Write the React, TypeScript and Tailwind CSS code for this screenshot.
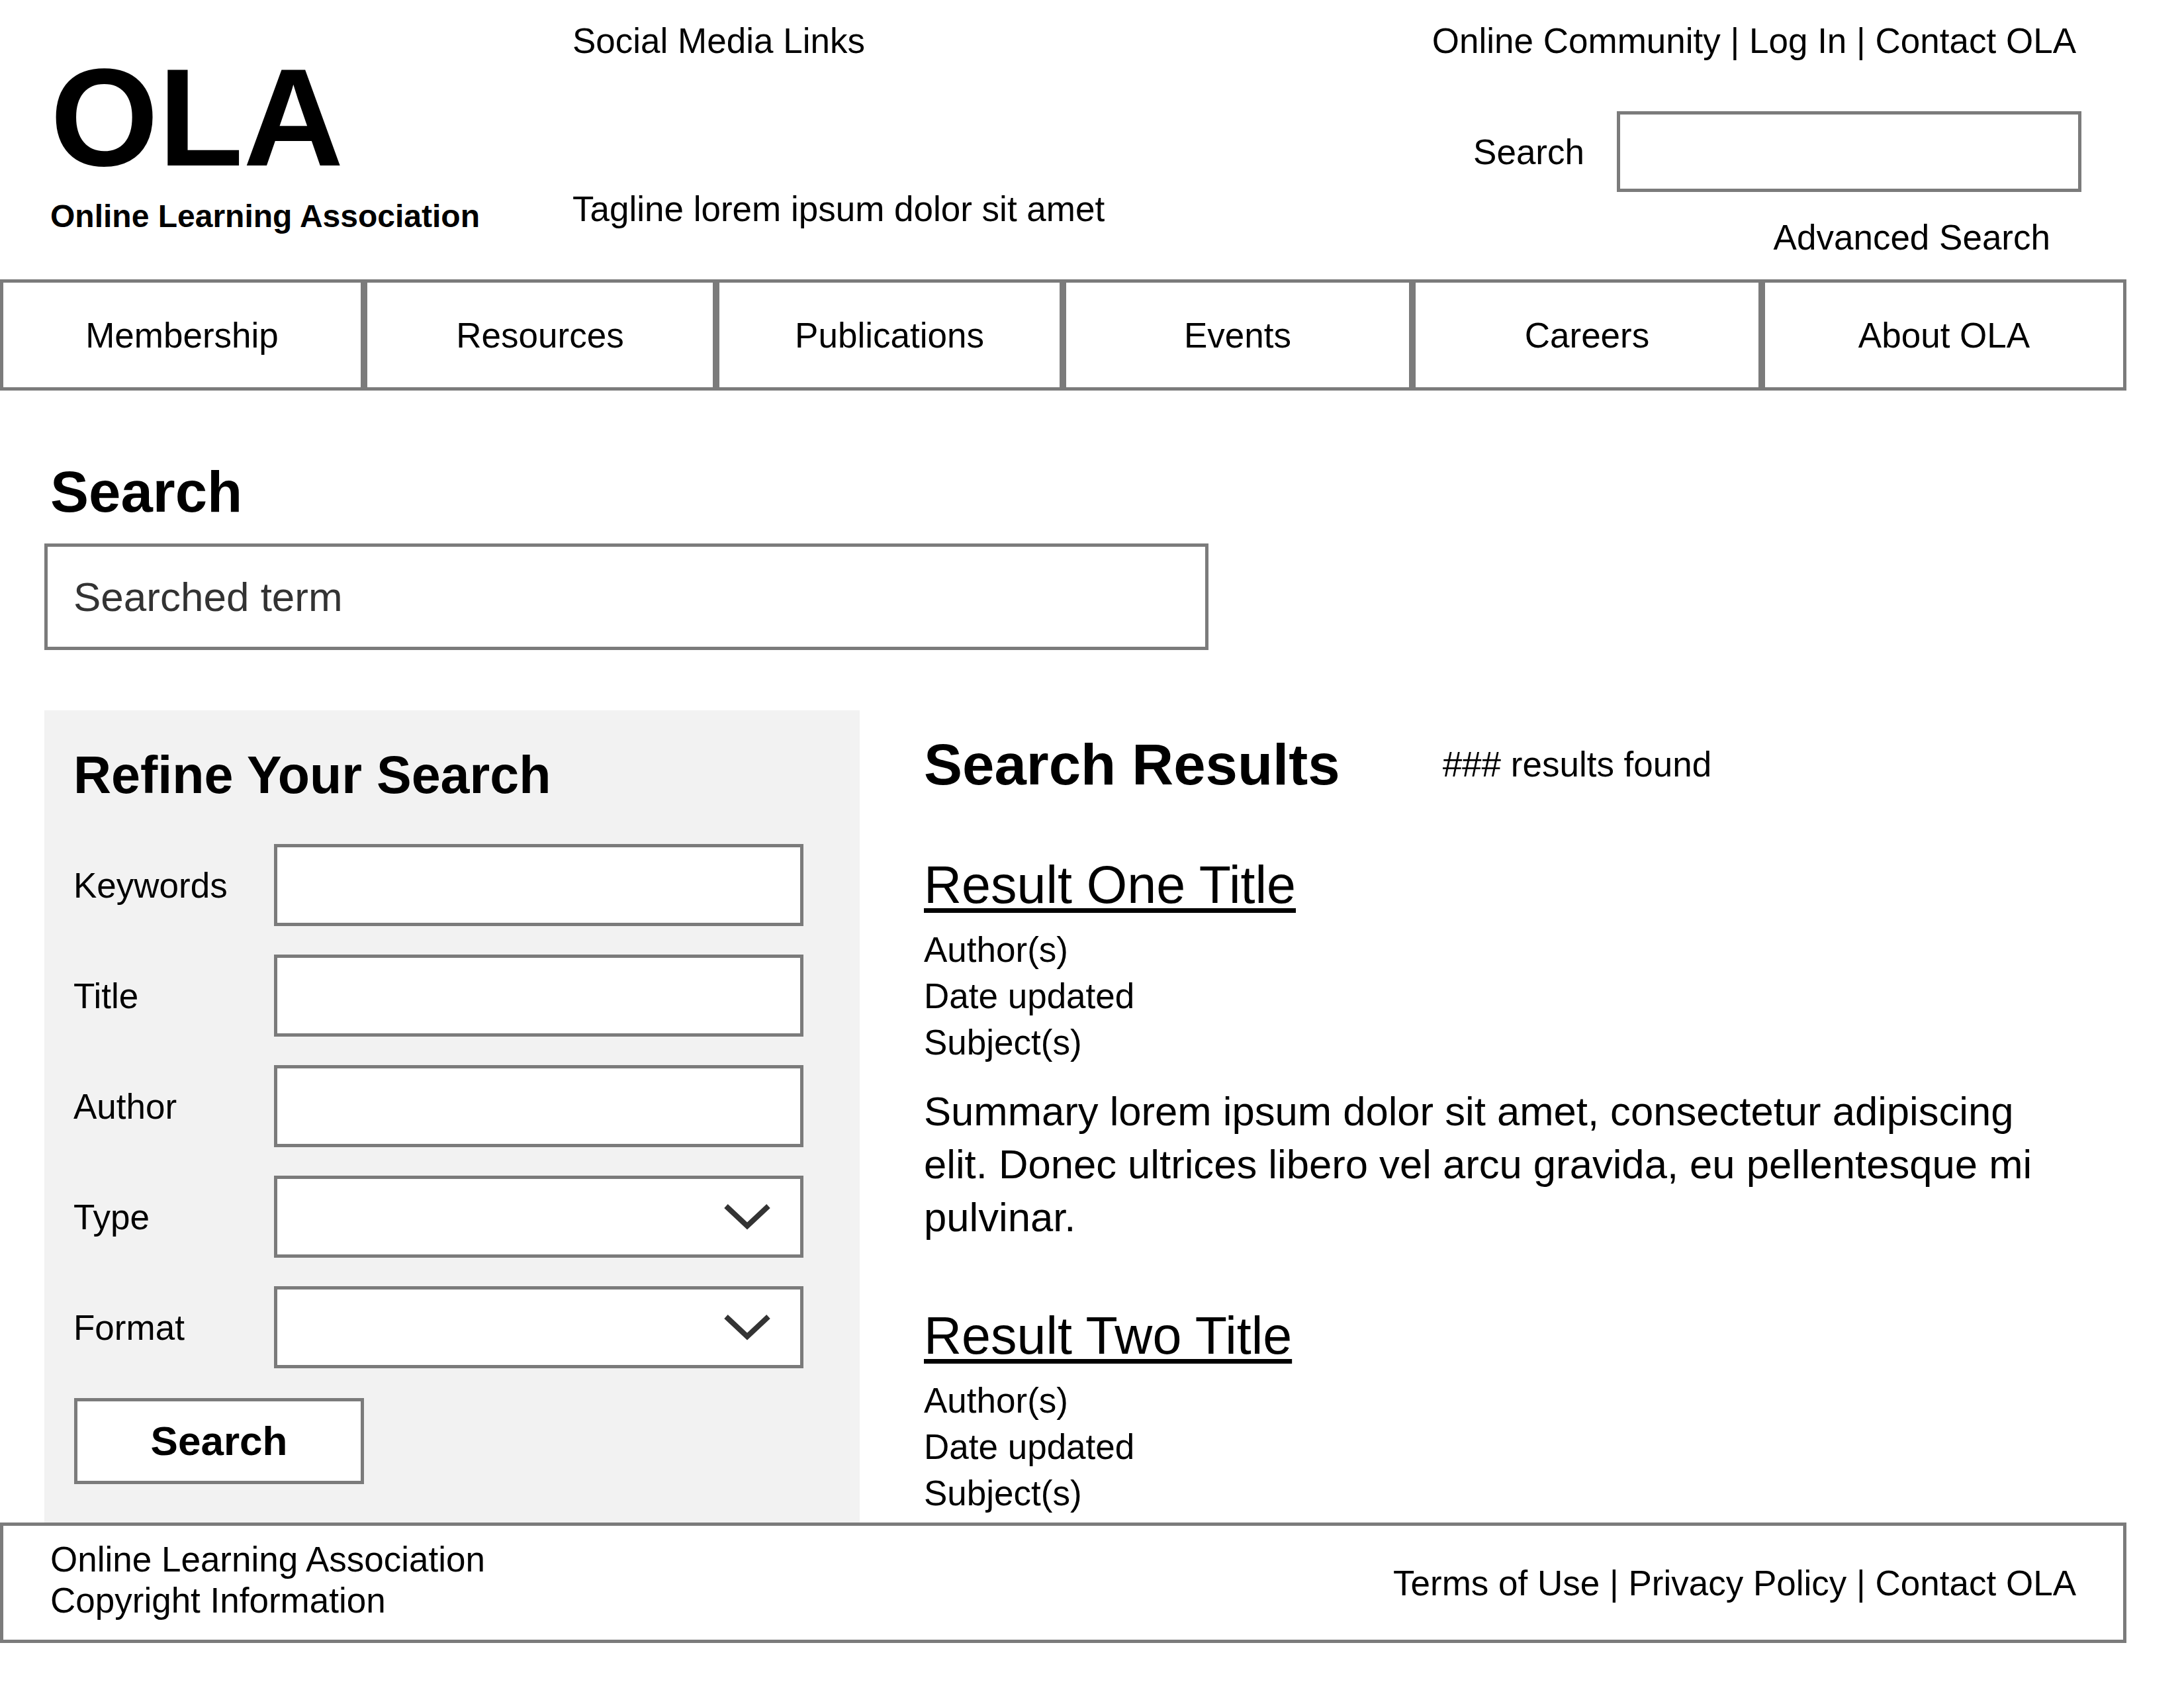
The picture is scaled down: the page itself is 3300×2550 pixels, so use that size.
import React from "react";

const font = { fontFamily: '"Liberation Sans", Arial, sans-serif' };

function Chevron() {
  return (
    <svg width="70" height="40" viewBox="0 0 70 40" className="mr-[45px]">
      <polyline points="3,4 35,34 67,4" fill="none" stroke="#333333" strokeWidth="8" />
    </svg>
  );
}

function FieldRow({ label, select }: { label: string; select?: boolean }) {
  return (
    <div className="flex items-center">
      <div className="w-[303px] text-[53px] leading-none text-black">{label}</div>
      <div className="flex h-[124px] w-[800px] items-center justify-end border-[5px] border-[#7b7b7b] bg-white">
        {select ? <Chevron /> : null}
      </div>
    </div>
  );
}

function Result({ title, summary }: { title: string; summary?: boolean }) {
  return (
    <div className="mt-[99px]">
      <div className="text-[79px] leading-none text-black underline decoration-[length:7px] underline-offset-[8px]">
        {title}
      </div>
      <div className="mt-[24px] text-[53px] leading-[70px] text-black">
        <div>Author(s)</div>
        <div>Date updated</div>
        <div>Subject(s)</div>
      </div>
      {summary ? (
        <p className="mt-[29px] w-[1700px] text-[61.6px] leading-[80px] text-black">
          Summary lorem ipsum dolor sit amet, consectetur adipiscing elit. Donec ultrices libero vel arcu gravida, eu
          pellentesque mi pulvinar.
        </p>
      ) : null}
    </div>
  );
}

export default function App() {
  const navItems: { label: string; w: string }[] = [
    { label: "Membership", w: "w-[550px]" },
    { label: "Resources", w: "w-[532px]" },
    { label: "Publications", w: "w-[524px]" },
    { label: "Events", w: "w-[528px]" },
    { label: "Careers", w: "w-[528px]" },
    { label: "About OLA", w: "w-[551px]" },
  ];

  return (
    <div className="min-h-[2550px] w-[3300px] bg-white text-black" style={font}>
      <div className="w-[3213px]">
        {/* Header */}
        <header className="flex h-[422px]">
          <div className="w-[865px] pl-[76px] pt-[73px]">
            <div className="text-[210px] font-bold leading-none">OLA</div>
            <div className="mt-[20px] text-[48px] font-bold leading-none">Online Learning Association</div>
          </div>
          <div className="flex-1 pt-[35px]">
            <div className="text-[53px] leading-none">Social Media Links</div>
            <div className="mt-[201px] text-[53px] leading-none">Tagline lorem ipsum dolor sit amet</div>
          </div>
          <div className="flex flex-col items-end pr-[68px] pt-[35px]">
            <div className="mr-[8px] text-[53px] leading-none whitespace-nowrap">
              Online Community | Log In | Contact OLA
            </div>
            <div className="mt-[80px] flex items-center">
              <div className="mr-[49px] text-[53px] leading-none">Search</div>
              <div className="h-[122px] w-[702px] border-[5px] border-[#7b7b7b] bg-white" />
            </div>
            <div className="mr-[47px] mt-[42px] text-[53px] leading-none">Advanced Search</div>
          </div>
        </header>

        {/* Nav */}
        <nav className="flex">
          {navItems.map((n) => (
            <div
              key={n.label}
              className={`${n.w} flex h-[168px] items-center justify-center border-[5px] border-[#7b7b7b] text-[53px] leading-none`}
            >
              {n.label}
            </div>
          ))}
        </nav>

        {/* Search heading */}
        <div className="pl-[67px]">
          <h1 className="ml-[9px] mt-[109px] text-[87px] font-bold leading-none">Search</h1>
          <div className="mt-[35px] flex h-[161px] w-[1759px] items-center border-[5px] border-[#7b7b7b] bg-white pl-[39px]">
            <span className="text-[62px] leading-none text-[#333333]">Searched term</span>
          </div>
        </div>

        {/* Main row */}
        <div className="mt-[91px] flex pl-[67px]">
          <aside className="w-[1232px] bg-[#f2f2f2] pl-[44px] pr-[84px] pt-[58px]">
            <h2 className="text-[79px] font-bold leading-none">Refine Your Search</h2>
            <div className="mt-[65px] flex flex-col gap-[43px]">
              <FieldRow label="Keywords" />
              <FieldRow label="Title" />
              <FieldRow label="Author" />
              <FieldRow label="Type" select />
              <FieldRow label="Format" select />
            </div>
            <button className="ml-[1px] mt-[45px] flex h-[130px] w-[438px] items-center justify-center border-[5px] border-[#7b7b7b] bg-white text-[62px] font-bold leading-none text-black">
              Search
            </button>
          </aside>

          <section className="ml-[97px] w-[1740px] pb-[9px] pt-[38px]">
            <div className="flex items-center">
              <h2 className="text-[87px] font-bold leading-none">Search Results</h2>
              <span className="ml-[155px] text-[53px] leading-none">### results found</span>
            </div>
            <Result title="Result One Title" summary />
            <Result title="Result Two Title" />
          </section>
        </div>

        {/* Footer */}
        <footer className="flex h-[182px] items-center justify-between border-[5px] border-[#7b7b7b] pl-[71px] pr-[71px]">
          <div className="-mt-[8px] text-[53px] leading-[62px]">
            <div>Online Learning Association</div>
            <div>Copyright Information</div>
          </div>
          <div className="text-[53px] leading-none">Terms of Use | Privacy Policy | Contact OLA</div>
        </footer>
      </div>
    </div>
  );
}
